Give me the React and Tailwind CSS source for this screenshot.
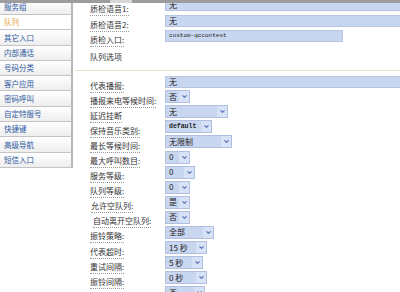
import { ChevronDown } from 'lucide-react'

const cjk = '"Noto Sans CJK SC", "Noto Sans", sans-serif'

const navItems = [
  { label: '服务组' },
  { label: '队列', active: true },
  { label: '其它入口' },
  { label: '内部通话' },
  { label: '号码分类' },
  { label: '客户应用' },
  { label: '密码呼叫' },
  { label: '自定特服号' },
  { label: '快捷键' },
  { label: '高级导航' },
  { label: '短信入口' },
]

const options = [
  { label: '代表播报:', input: '无' },
  { label: '播报来电等候时间:', select: '否', w: 'w-[25px]' },
  { label: '延迟挂断', select: '无', w: 'w-[63px]' },
  { label: '保持音乐类别:', select: 'default', w: 'w-[47px]', mono: true },
  { label: '最长等候时间:', select: '无限制', w: 'w-[67px]' },
  { label: '最大呼叫数目:', select: '0', w: 'w-[25px]' },
  { label: '服务等级:', select: '0', w: 'w-[30px]' },
  { label: '队列等级:', select: '0', w: 'w-[25px]' },
  { label: '允许空队列:', select: '是', w: 'w-[25px]', pad: 'pl-[1px]' },
  { label: '自动离开空队列:', select: '否', w: 'w-[25px]', pad: 'pl-[3px]' },
  { label: '振铃策略:', select: '全部', w: 'w-[49px]' },
  { label: '代表超时:', select: '15 秒', w: 'w-[42px]' },
  { label: '重试间隔:', select: '5 秒', w: 'w-[38px]' },
  { label: '振铃间隔:', select: '0 秒', w: 'w-[42px]' },
  { label: '呼叫记录:', select: '否', w: 'w-[40px]' },
]

function Label({ children, className = '' }) {
  return (
    <div className={`w-[75px] shrink-0 whitespace-nowrap ${className}`}>
      <span className="border-b border-dotted border-[#9a9a9a] pb-[1px] leading-none text-[8px] text-[#333]">
        {children}
      </span>
    </div>
  )
}

function TextBox({ value, mono, className = '' }) {
  return (
    <div
      className={`h-[12px] flex items-center border border-[#b7c5e2] bg-[#c9d6f0] pl-[3px] text-[8px] leading-none text-[#222] ${className}`}
      style={mono ? { fontFamily: '"Liberation Mono", monospace', fontSize: '6px' } : undefined}
    >
      {value}
    </div>
  )
}

function Select({ value, w, mono }) {
  return (
    <div className={`${w} h-[13px] shrink-0 flex items-center justify-between border border-[#b0bfdf] bg-[#c9d6f0]`}>
      <span
        className="whitespace-nowrap pl-[3px] text-[8px] leading-none text-[#222]"
        style={mono ? { fontFamily: '"Liberation Mono", monospace', fontSize: '6.5px', fontWeight: 700 } : undefined}
      >
        {value}
      </span>
      <span className="h-full w-[10px] flex items-center justify-center bg-[#d8e2f6]">
        <ChevronDown size={7} strokeWidth={3.5} className="text-[#4d6fb3]" />
      </span>
    </div>
  )
}

export default function App() {
  return (
    <div className="relative flex h-[292px] w-[400px] overflow-hidden bg-white" style={{ fontFamily: cjk }}>
      <div className="absolute left-0 top-0 flex h-[3px] w-full">
        <div className="h-full w-[110px] bg-[#9c9c9c]" />
        <div className="h-full w-[22px] bg-[#d6d6d6]" />
        <div className="h-full flex-1 bg-[#9c9c9c]" />
      </div>

      <nav className="mt-[-0.3px] flex w-[73px] shrink-0 flex-col">
        {navItems.map((it) => (
          <div
            key={it.label}
            className={`flex h-[15.3px] items-center border-b border-r-2 border-b-[#c4c4c4] border-r-[#b8b8b8] pl-[4px] text-[7.5px] leading-none ${
              it.active ? 'bg-white text-[#e0a33a]' : 'bg-gradient-to-b from-white to-[#eeeeee] text-[#2f58a0]'
            }`}
          >
            {it.label}
          </div>
        ))}
      </nav>

      <div className="min-w-0 flex-1">
        <div className="mt-[-2.5px] pl-[17px]">
          <div className="flex h-[15.5px] items-center">
            <Label>质检语音1:</Label>
            <TextBox value="无" className="mr-[-3px] flex-1" />
          </div>
          <div className="flex h-[15.5px] items-center">
            <Label>质检语音2:</Label>
            <TextBox value="无" className="mr-[-3px] flex-1" />
          </div>
          <div className="flex h-[15.5px] items-center">
            <Label>质检入口:</Label>
            <TextBox value="custom-qccontest" mono className="w-[178px]" />
          </div>
        </div>

        <div className="flex h-[26px] items-center pl-[17px] text-[8px] leading-none text-[#333]">队列选项</div>
        <div className="ml-[2px] border-t border-[#e6dfca]" />

        <div className="mt-[3px] pl-[17px]">
          {options.map((o) => (
            <div key={o.label} className="flex h-[15.1px] items-center">
              <Label className={o.pad || ''}>{o.label}</Label>
              {o.input ? (
                <TextBox value={o.input} className="mr-[-3px] h-[12px] flex-1" />
              ) : (
                <Select value={o.select} w={o.w} mono={o.mono} />
              )}
            </div>
          ))}
        </div>
      </div>
    </div>
  )
}
